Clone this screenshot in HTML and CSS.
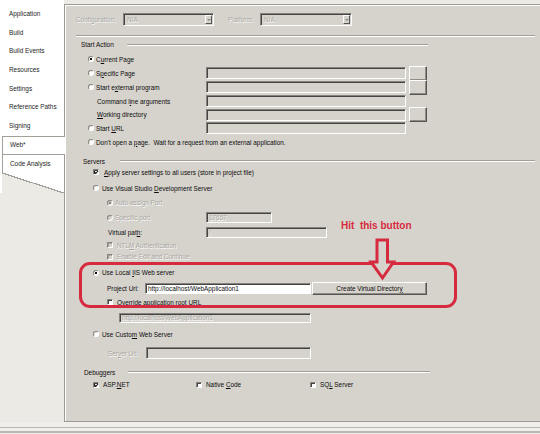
FILE: index.html
```html
<!DOCTYPE html>
<html lang="en">
<head>
    <meta charset="UTF-8">
    <meta name="viewport" content="width=device-width, initial-scale=1.0">
    <title>WebApplication1 - Web</title>
    <link rel="stylesheet" href="styles.css">
</head>
<body>
<div class="window">
    <div class="main">
        <ul class="tabs">
            <li>Application</li>
            <li>Build</li>
            <li>Build Events</li>
            <li>Resources</li>
            <li>Settings</li>
            <li>Reference Paths</li>
            <li>Signing</li>
            <li class="active">Web*</li>
            <li class="last">Code Analysis</li>
            <li class="tail"></li>
        </ul>

        <div class="page">
            <div class="row top">
                <span class="off cfg-label">Configuration:</span>
                <span class="combo"><span>N/A</span><i class="drop"></i></span>
                <span class="off plat-label">Platform:</span>
                <span class="combo wide"><span>N/A</span><i class="drop"></i></span>
            </div>
            <div class="sep"></div>

            <!-- start action -->
            <div class="row head start-head"><span class="title">Start Action</span><span class="rule"></span></div>
            <div class="row opt"><i class="radio on"></i><span>C<u>u</u>rrent Page</span></div>
            <div class="row opt"><i class="radio"></i><span class="field-label">S<u>p</u>ecific Page</span><span class="box"></span><span class="btn"></span></div>
            <div class="row opt"><i class="radio"></i><span class="field-label">Start e<u>x</u>ternal program</span><span class="box"></span><span class="btn"></span></div>
            <div class="row sub"><span class="field-label">Command l<u>i</u>ne arguments</span><span class="box"></span></div>
            <div class="row sub short"><span class="field-label"><u>W</u>orking directory</span><span class="box"></span><span class="btn"></span></div>
            <div class="row opt"><i class="radio"></i><span class="field-label">Start <u>U</u>RL</span><span class="box"></span></div>
            <div class="row opt"><i class="radio"></i><span>Don't open a <u>p</u>age.&nbsp; Wait for a request from an external application.</span></div>

            <!-- servers -->
            <div class="row head server-head"><span class="title">Servers</span><span class="rule"></span></div>
            <div class="row srv apply"><i class="check on"></i><span><u>A</u>pply server settings to all users (store in project file)</span></div>
            <div class="row srv push-4"><i class="radio"></i><span>Use Visual Studio <u>D</u>evelopment Server</span></div>
            <div class="row nested tall"><i class="radio on off"></i><span class="off">Auto-assign Port</span></div>
            <div class="row nested tall"><i class="radio off"></i><span class="off port-label">Specific port</span><span class="box port">17657</span></div>
            <div class="row nested vpath"><span class="vpath-label">Virtual pat<u>h</u>:</span><span class="box vpath-box">/</span></div>
            <div class="row nested ntlm"><i class="check off"></i><span class="off">NTL<u>M</u> Authentication</span></div>
            <div class="row nested enc"><i class="check off"></i><span class="off">Enable Edit and Continue</span></div>
            <div class="row srv iis"><i class="radio on"></i><span>Use Local <u>I</u>IS Web server</span></div>
            <div class="row nested project">
                <span class="url-label">Project Url:</span>
                <span class="box url-box live">http://localhost/WebApplication1</span>
                <span class="cmd">Create Virtual Director<u>y</u></span>
            </div>
            <div class="row nested"><i class="check"></i><span>Override application root <u>U</u>RL</span></div>
            <div class="row root-row"><span class="box root-box">http://localhost/WebApplication1</span></div>
            <div class="row srv custom"><i class="radio"></i><span>Use Custo<u>m</u> Web Server</span></div>
            <div class="row nested server-url"><span class="off url-label">Ser<u>v</u>er Url:</span><span class="box server-box"></span></div>

            <!-- debuggers -->
            <div class="row head debug-head"><span class="title">Debuggers</span><span class="rule"></span></div>
            <div class="row srv debuggers">
                <span class="dbg"><i class="check on"></i><span>ASP.<u>N</u>ET</span></span>
                <span class="dbg native"><i class="check"></i><span>Native <u>C</u>ode</span></span>
                <span class="dbg"><i class="check"></i><span>SQ<u>L</u> Server</span></span>
            </div>
        </div>
    </div>
    <div class="status"></div>

    <!-- red note drawn over the dialog -->
    <div class="callout"></div>
    <span class="hint">Hit&nbsp; this button</span>
    <svg class="hint-arrow" width="30" height="44" viewBox="0 0 30 44">
        <polygon points="9,2 19.5,2 19.5,24 25.5,24 14.5,40 3,24 9,24" fill="#d6d3cc" stroke="#d62b3f" stroke-width="3" stroke-linejoin="miter"/>
    </svg>
</div>
</body>
</html>
```

FILE: styles.css
```css
* { box-sizing: border-box; }
body { margin: 0; width: 540px; height: 434px; overflow: hidden; background: #ebeae5; font-family: "Liberation Sans", Arial, sans-serif; font-size: 6.4px; color: #0c0c0c; }
u { text-decoration-thickness: 0.6px; text-underline-offset: 0.8px; }

.window { position: relative; height: 434px; display: flex; flex-direction: column; }
.main { display: flex; height: 422px; }
.status { height: 12px; background: linear-gradient(#f0efeb 0 5px, #b9b7b1 5px 6px, #f0efeb 6px 9px, #b9b7b1 9px 11px, #f0efeb 11px); }

/* property page tabs */
.tabs { list-style: none; margin: 0; padding: 5px 0 0; width: 64px; flex: none; align-self: flex-start; background: #fff; }
.tabs li { height: 18.7px; line-height: 18.7px; padding-left: 9px; background: #fff; color: #262626; white-space: nowrap; }
.tabs .active { position: relative; z-index: 1; margin: 0 -1px 0 2px; padding-left: 7px; line-height: 16.7px; border: 1px solid #a3a09a; border-right: 0; }
.tabs .last { margin-left: 2px; padding-left: 7px; border-left: 1px solid #a3a09a; }
.tabs .tail { height: 20px; margin-left: 2px; padding: 0; background: linear-gradient(to top right, #ebeae5 calc(50% - 0.6px), #a3a09a calc(50% - 0.6px), #a3a09a calc(50% + 0.6px), #fff calc(50% + 0.6px)); }

/* page body */
.page { flex: 1; height: 418px; margin: 4px -8px 0 0; padding-top: 7px; background: #d6d3cc; border: 1px solid #9e9b94; box-shadow: inset 1px 1px #fff; }
.row { display: flex; align-items: center; height: 14px; white-space: nowrap; }
.off { color: #a8a59e; text-shadow: 0.6px 0.6px 0 #fff; }

.top { height: 15px; margin-left: 11px; }
.cfg-label { width: 47px; }
.plat-label { width: 32px; margin-left: 14px; }
.combo { display: flex; align-items: center; justify-content: space-between; width: 91px; height: 13px; padding: 0 1px 0 3px; background: #d6d3cc; border: 1px solid; border-color: #86837d #fff #fff #86837d; box-shadow: inset 1px 1px #444; color: #a8a59e; text-shadow: 0.6px 0.6px 0 #fff; }
.combo.wide { width: 92px; }
.drop { display: flex; align-items: center; justify-content: center; width: 7px; height: 9px; background: #d6d3cc; border: 1px solid; border-color: #fff #555 #555 #fff; }
.drop::after { content: ""; border: 2px solid transparent; border-bottom: 0; border-top-color: #8c8982; }

.sep { width: 459px; height: 2px; margin: 8px 0 0 11px; border-top: 1px solid #a19e97; border-bottom: 1px solid #fff; }

.head { height: 15px; }
.head .rule { height: 2px; border-top: 1px solid #a19e97; border-bottom: 1px solid #fff; }
.start-head { margin-left: 16px; }
.start-head .title { width: 46px; }
.start-head .rule { width: 301px; }
.server-head { height: 12px; margin: 6px 0 0 18px; }
.server-head .title { width: 37px; }
.server-head .rule { width: 415px; }
.debug-head { height: 12px; margin: 7px 0 0 19px; }
.debug-head .title { width: 44px; }
.debug-head .rule { width: 302px; }

/* radios and checkboxes */
.radio, .check { display: flex; align-items: center; justify-content: center; flex: none; width: 6px; height: 6px; background: #fff; border: 1px solid; border-color: #86837d #fff #fff #86837d; }
.radio { border-radius: 50%; }
.radio.on { background: radial-gradient(circle, #111 0 1.1px, #fff 1.5px); }
.radio.off { background: #d6d3cc; }
.radio.on.off { background: radial-gradient(circle, #8c8982 0 1.1px, #d6d3cc 1.5px); }
.check { box-shadow: inset 1px 1px #444; }
.check.off { background: #d6d3cc; box-shadow: inset 1px 1px #a8a59e; }
.check.on::after { content: ""; width: 3px; height: 1.6px; margin-top: -1px; border-left: 1px solid #111; border-bottom: 1px solid #111; transform: rotate(-45deg); }

/* text boxes and buttons */
.box { display: flex; align-items: center; flex: none; width: 200px; height: 12px; padding-left: 2px; background: #d6d3cc; border: 1px solid; border-color: #86837d #fff #fff #86837d; box-shadow: inset 1px 1px #444; color: #a8a59e; text-shadow: 0.6px 0.6px 0 #fff; }
.box.live { background: #fff; color: #0c0c0c; text-shadow: none; }
.btn { flex: none; width: 18px; height: 15px; margin-left: 3px; background: #d6d3cc; border: 1px solid; border-color: #fff #555 #555 #fff; box-shadow: inset -1px -1px #8e8b84; }
.cmd { display: flex; align-items: center; justify-content: center; flex: none; width: 115px; height: 13px; margin-left: 1px; background: #d6d3cc; border: 1px solid; border-color: #fff #555 #555 #fff; box-shadow: inset -1px -1px #8e8b84; }

/* start action rows */
.opt { margin-left: 23px; }
.opt .radio + span { margin-left: 2px; }
.opt .field-label { width: 110px; }
.sub { margin-left: 32px; }
.sub .field-label { width: 109px; }
.sub.short { height: 13px; }

/* server rows */
.srv { margin-left: 28px; }
.srv .radio + span { margin-left: 3px; }
.srv .check + span { margin-left: 5px; }
.apply { height: 10px; }
.push-4 { margin-top: 4px; }
.nested { margin-left: 42px; }
.nested .radio + span { margin-left: 2px; }
.nested .check + span { margin-left: 4px; }
.tall { height: 15px; }
.port-label { width: 91px; }
.box.port { width: 66px; height: 11px; }
.vpath { margin-left: 43px; }
.vpath-label { width: 98px; }
.vpath-box { width: 121px; height: 11px; }
.ntlm { height: 12px; }
.enc { height: 11px; }
.iis { height: 13px; margin-top: 4px; }
.project { margin-top: 2px; }
.url-label { width: 38px; }
.url-box { width: 166px; height: 11px; }
.root-row { height: 17px; margin-left: 54px; }
.root-box { width: 192px; height: 10px; }
.custom { height: 16px; }
.server-url { height: 12px; margin: 5px 0 0 43px; }
.server-box { width: 165px; }

.debuggers { height: 13px; }
.dbg { display: flex; align-items: center; width: 103px; }
.dbg.native { width: 114px; }
.dbg .check + span { margin-left: 4px; }

/* red note */
.callout { position: absolute; left: 79px; top: 262px; width: 378px; height: 46px; border: 3px solid #d62b3f; border-radius: 11px; }
.hint { position: absolute; left: 341px; top: 221px; font-size: 10px; font-weight: bold; line-height: 1; color: #d62b3f; white-space: nowrap; }
.hint-arrow { position: absolute; left: 368px; top: 238px; }
```
